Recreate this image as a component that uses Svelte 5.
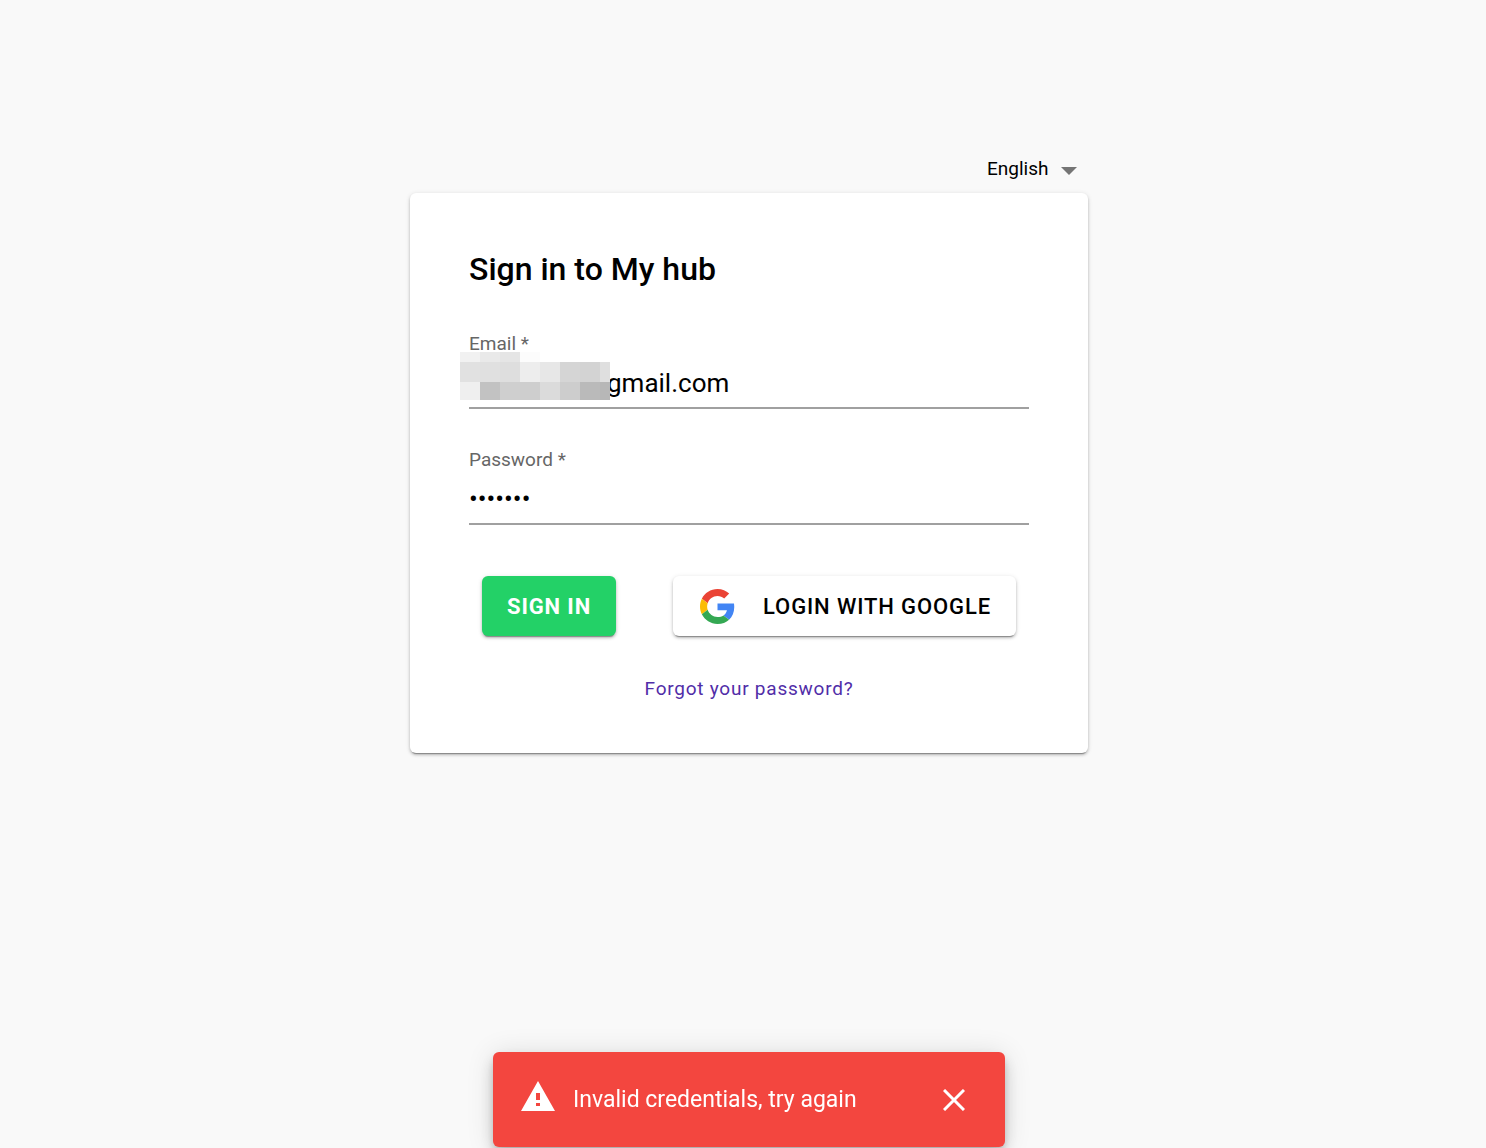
<script>
	let language = 'English';
	let email = 'gmail.com';
	let password = 'abcdefg';
	let showError = true;

	// shades of the hidden part of the address, one entry per block
	const mosaic = [
		{ y: 0, height: 10, shades: ['#f1f1f1', '#e9e9e9', '#e5e5e5', '#fcfcfc'] },
		{ y: 10, height: 20, shades: ['#e1e1e1', '#e0e0e0', '#dedede', '#ededed', '#e7e7e7', '#d5d5d5', '#d3d3d3', '#dfdfdf'] },
		{ y: 30, height: 18, shades: ['#efefef', '#c2c2c2', '#cfcfcf', '#cecece', '#dbdbdb', '#cdcdcd', '#bababa', '#b7b7b7'] }
	];

	function signIn(event) {
		event.preventDefault();
		showError = true;
	}

	function closeError() {
		showError = false;
	}
</script>

<main class="page">
	<div class="login">
		<div class="language">
			<select aria-label="Language" bind:value={language}>
				<option>English</option>
			</select>
			<svg class="arrow" viewBox="0 0 16 8" aria-hidden="true"><path d="M0 0h16L8 8z" /></svg>
		</div>

		<form class="card" on:submit={signIn}>
			<h1>Sign in to My hub</h1>

			<div class="field">
				<label for="email">Email *</label>
				<div class="control">
					<input id="email" class="masked" type="text" autocomplete="off" spellcheck="false" bind:value={email} />
					<svg class="mosaic" viewBox="0 0 150 48" shape-rendering="crispEdges" aria-hidden="true">
						{#each mosaic as row}
							{#each row.shades as shade, i}
								<rect x={i * 20} y={row.y} width="20" height={row.height} fill={shade} />
							{/each}
						{/each}
					</svg>
				</div>
			</div>

			<div class="field">
				<label for="password">Password *</label>
				<div class="control">
					<input id="password" type="password" autocomplete="off" bind:value={password} />
				</div>
			</div>

			<div class="actions">
				<button class="btn btn-primary" type="submit">SIGN IN</button>
				<button class="btn btn-google" type="button">
					<svg viewBox="0 0 48 48" aria-hidden="true">
						<path fill="#EA4335" d="M24 9.5c3.54 0 6.71 1.22 9.21 3.6l6.85-6.85C35.9 2.38 30.47 0 24 0 14.62 0 6.51 5.38 2.56 13.22l7.98 6.19C12.43 13.72 17.74 9.5 24 9.5z" />
						<path fill="#4285F4" d="M46.98 24.55c0-1.57-.15-3.09-.38-4.55H24v9.02h12.94c-.58 2.96-2.26 5.48-4.78 7.18l7.73 6c4.51-4.18 7.09-10.36 7.09-17.65z" />
						<path fill="#FBBC05" d="M10.53 28.59c-.48-1.45-.76-2.99-.76-4.59s.27-3.14.76-4.59l-7.98-6.19C.92 16.46 0 20.12 0 24c0 3.88.92 7.54 2.56 10.78l7.97-6.19z" />
						<path fill="#34A853" d="M24 48c6.48 0 11.93-2.13 15.89-5.81l-7.73-6c-2.15 1.45-4.92 2.3-8.16 2.3-6.26 0-11.57-4.22-13.47-9.91l-7.98 6.19C6.51 42.62 14.62 48 24 48z" />
					</svg>
					<span>LOGIN WITH GOOGLE</span>
				</button>
			</div>

			<a class="forgot" href="#forgot">Forgot your password?</a>
		</form>
	</div>
</main>

{#if showError}
	<div class="snackbar-container">
		<div class="snackbar" role="alert">
			<svg class="warning" viewBox="0 0 34 30" aria-hidden="true">
				<path fill-rule="evenodd" d="M17 0l17 30H0zM15 12v7h4v-7zM15 22v3h4v-3z" />
			</svg>
			<span class="message">Invalid credentials, try again</span>
			<button class="close" aria-label="Close" on:click={closeError}>
				<svg viewBox="0 0 22 22" aria-hidden="true"><path d="M1 1l20 20M21 1L1 21" /></svg>
			</button>
		</div>
	</div>
{/if}

<style>
:global(body) {
	background: #f9f9f9;
	font-family: Roboto, "Liberation Sans", sans-serif;
	color: #000;
}

.page {
	box-sizing: border-box;
	display: flex;
	justify-content: center;
	align-items: flex-start;
	min-height: 100vh;
	padding: 153px 0 0 12px;
}

.login {
	width: 100%;
	max-width: 678px;
}

.language {
	display: flex;
	justify-content: flex-end;
	align-items: center;
	padding: 0 11px 8px 0;
	gap: 12px;
}

.language select {
	appearance: none;
	border: none;
	background: transparent;
	padding: 0;
	font-family: inherit;
	font-size: 19px;
	line-height: 32px;
	height: 32px;
	color: #000;
	cursor: pointer;
}

.arrow {
	width: 16px;
	height: 8px;
	margin-top: 4px;
	fill: #757575;
	pointer-events: none;
}

.card {
	box-sizing: border-box;
	display: flex;
	flex-direction: column;
	background: #fff;
	border-radius: 6px;
	padding: 56px 59px 50px;
	box-shadow: 0 3px 1px -2px rgba(0, 0, 0, 0.3), 0 2px 3px 0 rgba(0, 0, 0, 0.2), 0 1px 5px 0 rgba(0, 0, 0, 0.12);
}

h1 {
	margin: 0 0 40px;
	font-size: 32px;
	line-height: 40px;
	font-weight: 500;
}

.field {
	margin-bottom: 36px;
}

.field label {
	display: block;
	font-size: 19px;
	line-height: 30px;
	color: #666;
}

.control {
	position: relative;
}

.control input {
	box-sizing: border-box;
	display: block;
	width: 100%;
	height: 50px;
	padding: 0;
	border: none;
	border-bottom: 2px solid #a0a0a0;
	border-radius: 0;
	outline: none;
	background: transparent;
	font-family: inherit;
	font-size: 26px;
	color: #000;
}

.control input.masked {
	padding-left: 138px;
}

.mosaic {
	position: absolute;
	top: -7px;
	left: -9px;
	width: 150px;
	height: 48px;
	pointer-events: none;
}

.actions {
	display: flex;
	justify-content: space-between;
	margin: 15px 13px 39px;
}

.btn {
	display: flex;
	align-items: center;
	justify-content: center;
	gap: 28px;
	height: 60px;
	padding: 0 25px;
	border: none;
	border-radius: 6px;
	font-family: inherit;
	font-size: 22px;
	font-weight: 500;
	letter-spacing: 0.04em;
	cursor: pointer;
	box-shadow: 0 3px 1px -2px rgba(0, 0, 0, 0.3), 0 2px 3px 0 rgba(0, 0, 0, 0.2), 0 1px 5px 0 rgba(0, 0, 0, 0.12);
}

.btn-primary {
	background: #23d167;
	color: #fff;
	font-weight: 700;
}

.btn-google {
	padding-left: 27px;
	background: #fff;
	color: #000;
}

.btn-google svg {
	width: 35px;
	height: 35px;
}

.forgot {
	align-self: center;
	font-size: 19px;
	line-height: 28px;
	letter-spacing: 0.04em;
	color: #512da8;
	text-decoration: none;
}

.forgot:hover {
	text-decoration: underline;
}

.snackbar-container {
	position: fixed;
	left: 12px;
	right: 0;
	bottom: 1px;
	display: flex;
	justify-content: center;
	pointer-events: none;
}

.snackbar {
	box-sizing: border-box;
	display: flex;
	align-items: center;
	width: 100%;
	max-width: 512px;
	height: 95px;
	padding: 0 40px 0 28px;
	border-radius: 6px;
	background: #f3463f;
	color: #fff;
	pointer-events: auto;
	box-shadow: 0 5px 8px -2px rgba(0, 0, 0, 0.2), 0 8px 16px 0 rgba(0, 0, 0, 0.14), 0 2px 28px 0 rgba(0, 0, 0, 0.12);
}

.warning {
	width: 34px;
	height: 30px;
	margin: 0 18px 8px 0;
	fill: #fff;
}

.message {
	flex: 1;
	font-size: 23px;
	line-height: 32px;
}

.close {
	display: flex;
	padding: 0;
	border: none;
	background: transparent;
	cursor: pointer;
}

.close svg {
	width: 22px;
	height: 22px;
	stroke: #fff;
	stroke-width: 3;
}
</style>
